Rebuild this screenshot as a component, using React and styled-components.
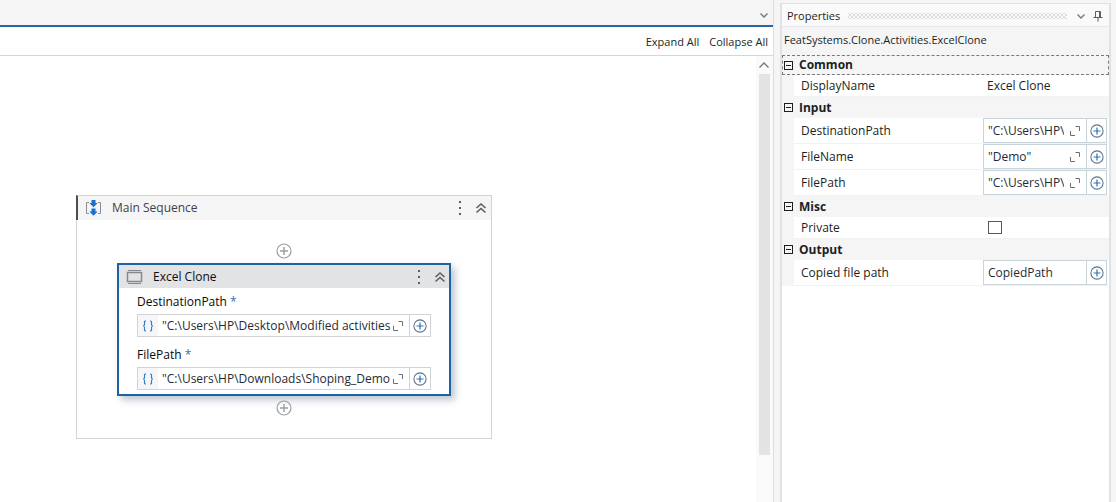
import React from "react";
import styled, { createGlobalStyle } from "styled-components";

const GlobalStyle = createGlobalStyle`
  *, *::before, *::after { box-sizing: border-box; }
  body {
    margin: 0;
    background: #f5f5f6;
    color: #1b1f24;
    font: 12px/16px "Open Sans", "Noto Sans", sans-serif;
  }
  h1, h2, p { margin: 0; font-size: 12px; font-weight: 400; }
`;

const Workspace = styled.div`
  display: grid;
  grid-template-columns: minmax(0, 1fr) 331px;
  column-gap: 6px;
  min-height: 100vh;
  padding-right: 5px;
`;

const Button = styled.button`
  display: flex;
  align-items: center;
  justify-content: center;
  flex: none;
  padding: 0;
  border: 0;
  background: none;
  color: ${(p) => p.$tone || "#5c5f63"};
  font: inherit;
  cursor: pointer;
`;

const Editor = styled.main`
  display: flex;
  flex-direction: column;
  border-right: 1px solid #dedee0;
  background: #fff;
`;

const TabStrip = styled.div`
  display: flex;
  align-items: center;
  justify-content: flex-end;
  height: 27px;
  padding: 4px 1px 0 0;
  border-bottom: 2px solid #2a669f;
  background: #f5f5f6;
`;

const Toolbar = styled.div`
  display: flex;
  align-items: center;
  justify-content: flex-end;
  gap: 10px;
  height: 29px;
  padding: 2px 5px 0 0;
  border-bottom: 1px solid #d4d5d7;
  font-size: 11px;
`;

const Body = styled.div`
  display: flex;
  flex: 1;
`;

const Canvas = styled.div`
  flex: 1;
  padding: 139px 0 0 76px;
`;

const ScrollBar = styled.div`
  display: flex;
  flex-direction: column;
  align-items: center;
  width: 17px;
  padding: 0 1px 47px 0;
  background: #fafafb;
`;

const Thumb = styled.div`
  flex: 1;
  width: 11px;
  background: #e2e3e5;
`;

const Sequence = styled.section`
  width: 416px;
  border: 1px solid #d2d3d5;
  background: #fff;
`;

const NodeHeader = styled.header`
  display: flex;
  align-items: center;
  height: ${(p) => (p.$nested ? 23 : 25)}px;
  padding: 0 2px 0 7px;
  background: ${(p) => (p.$nested ? "#e2e3e5" : "#f5f5f6")};
  color: ${(p) => (p.$nested ? "#0c0d0f" : "#39434e")};
`;

const SequenceHeader = styled(NodeHeader)`
  margin: -1px 0 0 -1px;
  padding-right: 3px;
  border-top: 1px solid #d2d3d5;
  border-left: 2px solid #4b4f54;
`;

const NodeTitle = styled.h2`
  flex: 1;
  padding-left: 9px;
`;

const NodeActions = styled.div`
  display: flex;
  align-items: center;
  gap: 7px;
`;

const Flow = styled.div`
  display: flex;
  flex-direction: column;
  align-items: center;
  gap: 4px;
  padding: 23px 40px 22px;
`;

const Activity = styled.section`
  align-self: stretch;
  border: 2px solid #1d62a6;
  background: #fff;
  box-shadow: 4px 4px 7px rgba(40, 70, 100, 0.3);
`;

const Fields = styled.div`
  display: flex;
  flex-direction: column;
  gap: 10px;
  padding: 6px 18px 4px;
`;

const Field = styled.div`
  display: flex;
  flex-direction: column;
  gap: 4px;
  color: #08090a;
`;

const Required = styled.span`
  color: #3273b5;
`;

const ExpressionBox = styled.div`
  display: flex;
  height: ${(p) => (p.$grid ? 25 : 23)}px;
  border: 1px solid ${(p) => (p.$grid ? "#c9d3da" : "#d2d3d5")};
  background: #fff;
`;

const Braces = styled.span`
  display: flex;
  align-items: center;
  justify-content: center;
  flex: none;
  width: 20px;
  background: #f5f6f8;
  color: #3a7cc4;
`;

const ExpressionInput = styled.input`
  flex: 1;
  min-width: 0;
  margin: 0 ${(p) => (p.$grid ? 5 : 0)}px 0 4px;
  padding: 0;
  border: 0;
  outline: 0;
  background: none;
  color: #1f2b37;
  font: inherit;
`;

const AddCell = styled(Button)`
  width: ${(p) => (p.$grid ? 20 : 21)}px;
  margin-left: 5px;
  border-left: 1px solid ${(p) => (p.$grid ? "#c9d3da" : "#d2d3d5")};
`;

const Panel = styled.aside`
  display: flex;
  flex-direction: column;
  margin-top: 3px;
  border: solid #e1e2e4;
  border-width: 1px 2px 0;
  background: #fff;
`;

const PanelHeader = styled.header`
  display: flex;
  align-items: center;
  gap: 3px;
  height: 23px;
  padding: 2px 5px 0;
  border-bottom: 1px solid #e6e7e9;
  background: #fafafb;
`;

const PanelTitle = styled.h1`
  && { font-size: 11px; }
`;

const Grip = styled.div`
  flex: 1;
  height: 6px;
  margin: 0 3px 0 5px;
  background-image: radial-gradient(circle, #c4c6c8 0 0.5px, transparent 1px),
    radial-gradient(circle, #c4c6c8 0 0.5px, transparent 1px);
  background-size: 4px 4px;
  background-position: 0 0, 2px 2px;
`;

const TypeName = styled.p`
  && { font-size: 11px; }
  height: 28px;
  padding: 5px 2px;
  background: #f5f5f6;
`;

const Group = styled.section`
  padding-left: 12px;
  background: #f5f5f6;
`;

const GroupTitle = styled.h2`
  && { font-weight: 700; }
  display: flex;
  align-items: center;
  gap: 6px;
  height: ${(p) => (p.$selected ? 20 : 21)}px;
  margin-left: -12px;
  padding-left: 1px;
  border: ${(p) => (p.$selected ? "1px dashed #77797c" : "1px solid transparent")};
`;

const Property = styled.div`
  display: grid;
  grid-template-columns: minmax(0, 1fr) 124px;
  align-items: center;
  height: ${(p) => (p.$compact ? 22 : 26)}px;
  padding-right: 2px;
  border-bottom: 1px solid #f2f2f3;
  background: #fff;
`;

const PropertyLabel = styled.label`
  padding-left: 7px;
`;

const PlainInput = styled(ExpressionInput)`
  color: #1b1f24;
`;

const CheckBox = styled.input`
  appearance: none;
  width: 14px;
  height: 13px;
  margin: 0 0 0 5px;
  border: 1px solid #55585c;
  background: #fff;
`;

const Svg = ({ w = 16, h = 16, children, ...rest }) => (
  <svg width={w} height={h} viewBox={`0 0 ${w} ${h}`} fill="none" stroke="currentColor" aria-hidden="true" {...rest}>
    {children}
  </svg>
);

const Chevron = ({ up }) => (
  <Svg w={16} h={18} stroke="#75787c" strokeWidth="1.4">
    <path d={up ? "M3.500 11.500 8 7 12.500 11.500" : "M4.500 7.500 8 11 11.500 7.500"} />
  </Svg>
);

const DoubleChevron = () => (
  <Svg w={14} h={14} strokeWidth="1.6">
    <path d="M2.500 7 7 3 11.500 7M2.500 11.500 7 7.500 11.500 11.500" />
  </Svg>
);

const Dots = () => (
  <Svg w={14} h={16} fill="currentColor" stroke="none">
    <path d="M6 1h2v2H6zM6 7h2v2H6zM6 13h2v2H6z" />
  </Svg>
);

const Plus = ({ cross = "currentColor", w = 16 }) => (
  <Svg w={w} h={w} viewBox="0 0 16 16">
    <circle cx="8" cy="8" r="7" strokeWidth="1.2" />
    <path d="M8 4v8M4 8h8" stroke={cross} strokeWidth="1.4" />
  </Svg>
);

const Expand = () => (
  <Svg w={12} h={12}>
    <path d="M1.500 6v4.500H6M6.500 1.500H10.500V6" />
  </Svg>
);

const SequenceIcon = () => (
  <Svg w={18} h={18}>
    <path d="M4 3.500H1.500v11H4M13 3.500h2.500v11H13" stroke="#8b8f94" />
    <path d="M6.500 1h4v3h2.200L8.500 8.300 4.300 4h2.200zM6.500 9.500h4v3h2.200l-4.200 4.300-4.200-4.300h2.200z" fill="#1b6fd0" stroke="none" />
  </Svg>
);

const ActivityIcon = () => (
  <Svg w={18} h={16} stroke="#85888b">
    <path d="M2 1.500h13M2 14.500h13" strokeWidth="1.2" />
    <rect x="1.500" y="3.500" width="14" height="9" strokeWidth="1.5" />
  </Svg>
);

const BracesIcon = () => (
  <Svg w={12} h={12} strokeWidth="1.2">
    <path d="M4 1H3.500Q2.500 1 2.500 2v2.500Q2.500 6 1 6q1.500 0 1.500 1.500V10q0 1 1 1H4M8 1h.5q1 0 1 1v2.500Q9.500 6 11 6 9.500 6 9.500 7.500V10q0 1-1 1H8" />
  </Svg>
);

const Pin = () => (
  <Svg w={12} h={14} strokeWidth="1">
    <path d="M3.500 8V2.500h5V8M1.500 8.500h9M6 8.500v4M7.500 2.500V8" />
  </Svg>
);

const Minus = () => (
  <Svg w={9} h={9} stroke="#1b1f24">
    <rect x=".5" y=".5" width="8" height="8" />
    <path d="M2 4.500h5" />
  </Svg>
);

function Actions() {
  return (
    <NodeActions>
      <Button aria-label="Options"><Dots /></Button>
      <Button aria-label="Collapse"><DoubleChevron /></Button>
    </NodeActions>
  );
}

function Expression({ id, value, grid, braces, expandable = true }) {
  return (
    <ExpressionBox $grid={grid}>
      {braces && <Braces><BracesIcon /></Braces>}
      <ExpressionInput id={id} defaultValue={value} $grid={grid} />
      {expandable && <Button aria-label="Open editor" $tone="#6b7075"><Expand /></Button>}
      <AddCell $grid={grid} $tone="#5d7387" aria-label="Add">
        <Plus cross="#2a73bd" w={14} />
      </AddCell>
    </ExpressionBox>
  );
}

function ActivityField({ id, label, value }) {
  return (
    <Field>
      <label htmlFor={id}>{label} <Required>*</Required></label>
      <Expression id={id} value={value} braces />
    </Field>
  );
}

const groups = [
  { title: "Common", selected: true, items: [{ label: "DisplayName", kind: "plain", value: "Excel Clone" }] },
  {
    title: "Input",
    items: [
      { label: "DestinationPath", value: '"C:\\Users\\HP\\Desktop\\Modified activities' },
      { label: "FileName", value: '"Demo"' },
      { label: "FilePath", value: '"C:\\Users\\HP\\Downloads\\Shoping_Demo' },
    ],
  },
  { title: "Misc", items: [{ label: "Private", kind: "check" }] },
  { title: "Output", items: [{ label: "Copied file path", value: "CopiedPath", expandable: false }] },
];

function PropertyRow({ label, kind, value, expandable }) {
  const id = `property-${label.replace(/ /g, "-")}`;
  return (
    <Property $compact={Boolean(kind)}>
      <PropertyLabel htmlFor={id}>{label}</PropertyLabel>
      {kind === "plain" && <PlainInput id={id} defaultValue={value} />}
      {kind === "check" && <CheckBox id={id} type="checkbox" />}
      {!kind && <Expression id={id} value={value} expandable={expandable} grid />}
    </Property>
  );
}

export default function App() {
  return (
    <Workspace>
      <GlobalStyle />
      <Editor>
        <TabStrip>
          <Button aria-label="Open tabs"><Chevron /></Button>
        </TabStrip>
        <Toolbar>
          <Button $tone="#1b1f24">Expand All</Button>
          <Button $tone="#1b1f24">Collapse All</Button>
        </Toolbar>
        <Body>
          <Canvas>
            <Sequence>
              <SequenceHeader>
                <SequenceIcon />
                <NodeTitle>Main Sequence</NodeTitle>
                <Actions />
              </SequenceHeader>
              <Flow>
                <Button aria-label="Add activity before" $tone="#9c9ea1"><Plus /></Button>
                <Activity>
                  <NodeHeader $nested>
                    <ActivityIcon />
                    <NodeTitle>Excel Clone</NodeTitle>
                    <Actions />
                  </NodeHeader>
                  <Fields>
                    <ActivityField id="destination" label="DestinationPath" value={'"C:\\Users\\HP\\Desktop\\Modified activities'} />
                    <ActivityField id="file" label="FilePath" value={'"C:\\Users\\HP\\Downloads\\Shoping_Demo'} />
                  </Fields>
                </Activity>
                <Button aria-label="Add activity after" $tone="#9c9ea1"><Plus /></Button>
              </Flow>
            </Sequence>
          </Canvas>
          <ScrollBar>
            <Button aria-label="Scroll up"><Chevron up /></Button>
            <Thumb />
          </ScrollBar>
        </Body>
      </Editor>
      <Panel>
        <PanelHeader>
          <PanelTitle>Properties</PanelTitle>
          <Grip />
          <Button aria-label="Panel options"><Chevron /></Button>
          <Button aria-label="Pin panel"><Pin /></Button>
        </PanelHeader>
        <TypeName>FeatSystems.Clone.Activities.ExcelClone</TypeName>
        {groups.map((group) => (
          <Group key={group.title}>
            <GroupTitle $selected={group.selected}><Minus />{group.title}</GroupTitle>
            {group.items.map((item) => <PropertyRow key={item.label} {...item} />)}
          </Group>
        ))}
      </Panel>
    </Workspace>
  );
}
